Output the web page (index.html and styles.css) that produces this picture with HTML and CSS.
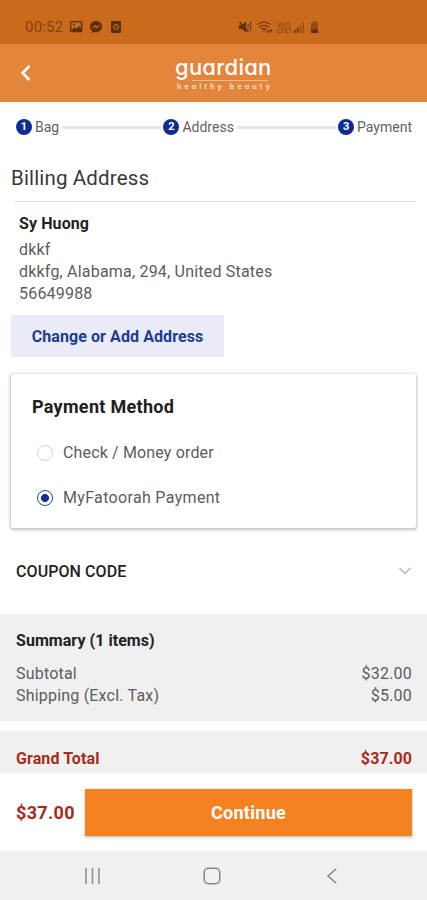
FILE: index.html
```html
<!DOCTYPE html>
<html lang="en">
<head>
<meta charset="utf-8">
<title>Checkout</title>
<link rel="stylesheet" href="styles.css">
</head>
<body>
<div class="status">
  <span class="clock">00:52</span>
  <svg class="notify" width="52" height="14" viewBox="0 0 52 14">
    <rect x=".7" y="1.7" width="11" height="10" rx="1" fill="none" stroke="currentColor" stroke-width="1.3"/>
    <path d="M1 11 4.5 7l2 2L9 6l3 3v3H1z" fill="currentColor"/><circle cx="4" cy="4.5" r="1" fill="currentColor"/>
    <path d="M26 1c-3.500 0-6 2.400-6 5.700 0 1.800.8 3.200 2 4.200V13l2-1.100c.6.200 1.300.3 2 .3 3.500 0 6-2.400 6-5.500S29.500 1 26 1z" fill="currentColor"/>
    <path d="m22.300 8.300 2.900-3.200 1.700 1.600 2.900-1.600-2.900 3.200-1.700-1.600z" fill="#c96a1c" stroke="#c96a1c" stroke-width=".5"/>
    <rect x="41" y="1" width="10" height="12" rx="1" fill="currentColor"/>
    <circle cx="46" cy="7" r="2.500" fill="none" stroke="#c96a1c"/><path d="M46 5.500V7h1.500" fill="none" stroke="#c96a1c" stroke-width=".8"/>
  </svg>
  <svg class="signals" width="84" height="14" viewBox="0 0 84 14">
    <path d="M1 5h3l4-3.500v11L4 9H1z" fill="currentColor"/><path d="m1.500 2 9 10" stroke="currentColor" stroke-width="1.300"/>
    <path d="M10 4v5M12.500 2v9" stroke="currentColor" stroke-width="1.200" stroke-dasharray="3 1"/>
    <g fill="none" stroke="currentColor" stroke-width="1.200"><path d="M19.500 4.500q6.500-5 13 0M21.500 7q4.500-3.500 9 0M23.700 9.300q2.300-1.800 4.500 0"/></g>
    <path d="m24.500 10.500 1.500 1.500 1.500-1.500zM29 10h1.700v2.500H29zM32 9h1.500v3.500H32z" fill="currentColor"/>
    <text class="volte" x="39" y="6.500">Vo))</text><text class="volte" x="39" y="13">LTE1</text>
    <g fill="currentColor"><path d="M56 10h1.600v3H56zM58.800 8h1.600v5h-1.600z"/><path opacity=".45" d="M61.600 5h1.600v8h-1.600zM64.400 2H66v11h-1.600z"/>
    <path opacity=".5" d="M75 1h3v1.500h2V10h-7V2.500h2z"/><path d="M73 9.500h7V13h-7z"/></g>
  </svg>
</div>
<header class="bar">
  <svg class="back" width="14" height="18" viewBox="0 0 14 18"><path d="M10.500 2 3.500 9l7 7" fill="none" stroke="#fff" stroke-width="2.500"/></svg>
  <div class="logo">
    <div class="brand">guardian</div>
    <div class="tag">healthy beauty</div>
  </div>
</header>
<nav class="steps">
  <span class="num">1</span><span class="name">Bag</span><i class="line"></i>
  <span class="num">2</span><span class="name">Address</span><i class="line"></i>
  <span class="num">3</span><span class="name">Payment</span>
</nav>
<section class="billing">
  <h1>Billing Address</h1>
  <div class="address">
    <strong>Sy Huong</strong>
    <p>dkkf</p>
    <p>dkkfg, Alabama, 294, United States</p>
    <p>56649988</p>
  </div>
  <button class="change">Change or Add Address</button>
</section>
<section class="card">
  <h2>Payment Method</h2>
  <div class="option"><i class="radio"></i><span class="check">Check / Money order</span></div>
  <div class="option"><i class="radio on"></i><span class="fatoorah">MyFatoorah Payment</span></div>
</section>
<section class="coupon">
  <span>COUPON CODE</span>
  <svg width="14" height="10" viewBox="0 0 14 10"><path d="m1.500 2 5.500 5.500L12.500 2" fill="none" stroke="#b5b5b5" stroke-width="1.300"/></svg>
</section>
<section class="summary">
  <h3>Summary (1 items)</h3>
  <div class="row"><span>Subtotal</span><span class="amt">$32.00</span></div>
  <div class="row"><span>Shipping (Excl. Tax)</span><span class="amt">$5.00</span></div>
</section>
<section class="grand"><span>Grand Total</span><span class="amt">$37.00</span></section>
<footer class="checkout"><span class="total">$37.00</span><button class="continue">Continue</button></footer>
<div class="sysnav">
  <svg width="18" height="18" viewBox="0 0 18 18"><path d="M2 1v16M8.500 1v16M15 1v16" stroke="#929292" stroke-width="1.600"/></svg>
  <svg width="18" height="18" viewBox="0 0 18 18"><rect x="1.200" y="1.200" width="15.600" height="15.600" rx="4.200" fill="none" stroke="#858585" stroke-width="1.500"/></svg>
  <svg width="18" height="18" viewBox="0 0 18 18"><path d="M14 2 6 9l8 7" fill="none" stroke="#858585" stroke-width="1.500"/></svg>
</div>
</body>
</html>
```
FILE: styles.css
```css
* { box-sizing: border-box; margin: 0; padding: 0; }
body { width: 427px; height: 900px; overflow: hidden; background: #fff; font-family: Roboto, "Liberation Sans", sans-serif; color: #5c5c5c; font-size: 16px; }
button { border: 0; font-family: inherit; }
.status { height: 44px; background: #c96a1c; display: flex; align-items: flex-start; color: #5f2d08; padding: 20px 0 0 25px; }
.clock { font-size: 15px; line-height: 15px; width: 45px; letter-spacing: .2px; color: #843f0d; }
.signals { margin-left: 116px; }
.volte { font-size: 7px; fill: currentColor; opacity: .75; }
.bar { height: 58px; background: #e4853c; display: flex; align-items: flex-start; padding-left: 19px; }
.back { margin-top: 20px; }
.logo { color: #fff; padding-top: 9px; margin-left: 142px; width: 98px; }
.brand { font: 500 22px/28px Inter, sans-serif; font-feature-settings: "cv11"; letter-spacing: .25px; white-space: nowrap; height: 27px; }
.brand { height: 28px; background: linear-gradient(#f2bd8f, #f2bd8f) 17px 100% / 76px 1px no-repeat; }
.tag { font: 600 7px/9px Inter, sans-serif; font-feature-settings: "cv11"; letter-spacing: 3.200px; white-space: nowrap; margin: 1px 0 0 2px; color: #fce8d6; }
.steps { height: 51px; display: flex; align-items: center; padding: 0 15px 1px 16px; font-size: 14px; color: #626262; }
.num { width: 16px; height: 16px; border-radius: 50%; background: #102c91; color: #fff; font-size: 11px; font-weight: 700; line-height: 16px; text-align: center; flex: none; margin-bottom: 1px; }
.name { margin-left: 3px; line-height: 18px; }
.line { flex: 1; height: 3px; background: #e6e6e6; margin: 0 2px 0 3px; }
.billing { padding: 0 11px; }
h1 { font-weight: 400; font-size: 20.500px; line-height: 28px; color: #383838; padding: 11px 0 9px; height: 50px; letter-spacing: .15px; background: linear-gradient(#e4e4e4, #e4e4e4) 3px 48px / 100% 1px no-repeat; }
.address { padding: 10px 0 0 8px; height: 112px; line-height: 22px; letter-spacing: .2px; }
.address strong { display: block; color: #222; font-weight: 700; height: 26px; letter-spacing: .1px; }
.address p { white-space: nowrap; height: 22px; }
.change { display: block; width: 213px; height: 42px; background: #e9ecf6; color: #213b94; font-size: 16px; font-weight: 700; white-space: nowrap; letter-spacing: .08px; }
.card { margin: 17px 11px 0; height: 154px; background: #fff; border-radius: 2px; box-shadow: 0 1px 3px 1px rgba(0,0,0,.24); padding: 20px 21px; }
h2 { font-size: 18px; line-height: 26px; font-weight: 700; color: #202020; letter-spacing: .3px; }
.option { display: flex; align-items: center; height: 24px; margin: 21px 0 0 5px; letter-spacing: .15px; padding-bottom: 1px; }
.radio { width: 16px; height: 16px; border: 1px solid #d4d4d4; border-radius: 50%; margin: 1px 10px 0 0; }
.radio.on { border: 1.500px solid #27479c; background: radial-gradient(circle, #12329b 0 3.700px, #fff 4.300px); }
.fatoorah { letter-spacing: .33px; }
.coupon { height: 86px; display: flex; justify-content: space-between; align-items: center; padding: 0 15px 0 16px; color: #222; font-weight: 500; letter-spacing: .08px; }
.summary { height: 107px; background: #f0f0f0; padding: 16px 15px 0 16px; line-height: 22px; }
h3 { font-size: 16px; line-height: 22px; color: #222; margin-bottom: 11px; font-weight: 700; letter-spacing: .05px; }
.row { display: flex; justify-content: space-between; height: 22px; letter-spacing: .2px; }
.grand { margin-top: 10px; height: 42px; background: #f0f0f0; display: flex; justify-content: space-between; padding: 17px 15px 0 16px; line-height: 22px; font-weight: 700; color: #a72b1b; letter-spacing: .1px; }
.checkout { height: 78px; display: flex; align-items: center; padding: 0 15px 0 16px; }
.total { width: 69px; color: #a72b1b; font-size: 18px; font-weight: 700; letter-spacing: .35px; }
.continue { flex: 1; height: 47px; background: #f58220; color: #fff; font-size: 18px; font-weight: 700; box-shadow: 0 1px 3px rgba(0,0,0,.3); letter-spacing: .3px; }
.sysnav { height: 49px; background: #f0f0f0; display: flex; justify-content: space-between; align-items: center; padding: 0 87px 0 84px; }
```
